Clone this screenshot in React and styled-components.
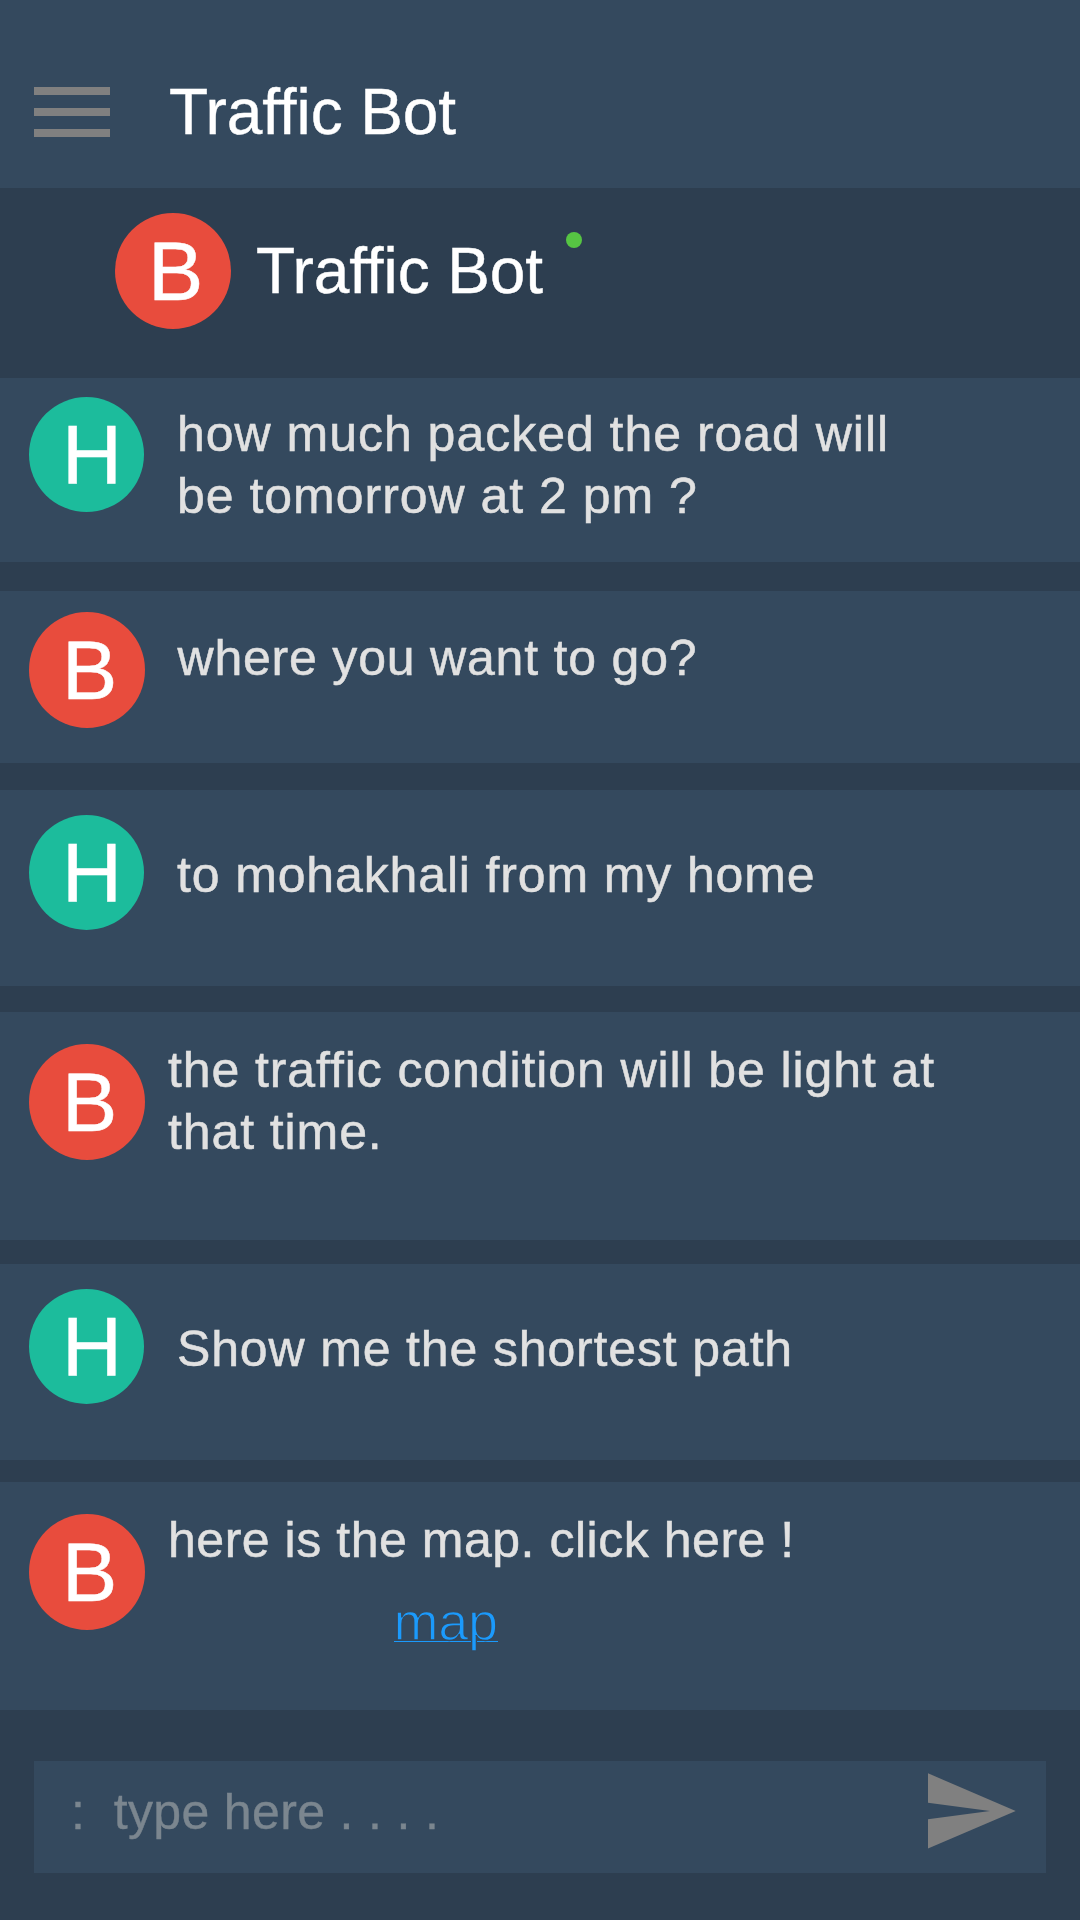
import React from "react";
import styled, { createGlobalStyle } from "styled-components";

const GlobalStyle = createGlobalStyle`
  *, *::before, *::after { box-sizing: border-box; }
  body {
    margin: 0;
    background: #2d3e50;
    font-family: "Liberation Sans", Arial, Helvetica, sans-serif;
  }
`;

const Screen = styled.main`
  width: 1080px;
  height: 1920px;
  display: flex;
  flex-direction: column;
  overflow: hidden;
  background: #2d3e50;
`;

const AppBar = styled.header`
  height: 188px;
  flex: none;
  display: flex;
  align-items: flex-start;
  padding: 76px 0 0 34px;
  background: #34495e;
`;

const MenuButton = styled.button`
  display: flex;
  flex-direction: column;
  gap: 13px;
  width: 76px;
  margin: 11px 59px 0 0;
  padding: 0;
  border: 0;
  background: none;
`;

const MenuBar = styled.span`
  height: 8px;
  background: #808080;
`;

const Title = styled.h1`
  margin: 0;
  font-size: 64px;
  font-weight: 400;
  line-height: 72px;
  letter-spacing: -0.1px;
  color: #fff;
  -webkit-text-stroke: 0.4px #fff;
  font-variant-ligatures: none;
  white-space: nowrap;
  transform: scaleY(1.025);
  transform-origin: 0 58px;
`;

const Contact = styled.section`
  height: 190px;
  flex: none;
  display: flex;
  align-items: flex-start;
  padding: 25px 0 0 115px;
`;

const ContactName = styled(Title).attrs({ as: "h2" })`
  width: 288px;
  margin: 22px 22px 0 25px;
`;

const OnlineDot = styled.span`
  width: 16px;
  height: 16px;
  margin-top: 19px;
  border-radius: 50%;
  background: #56c543;
`;

const Avatar = styled.div`
  flex: none;
  width: ${(p) => (p.$bot ? 116 : 115)}px;
  height: ${(p) => (p.$bot ? 116 : 115)}px;
  padding: 17px 0 0 33px;
  border-radius: 50%;
  background: ${(p) => (p.$bot ? "#e84c3d" : "#1cbc9c")};
  color: #fff;
  -webkit-text-stroke: 0.5px #fff;
  font-size: 83px;
  line-height: 83px;
`;

const Thread = styled.section`
  flex: none;
  display: flex;
  flex-direction: column;
`;

const Message = styled.article`
  display: flex;
  align-items: flex-start;
  height: ${(p) => p.$height}px;
  margin-bottom: ${(p) => p.$gap}px;
  padding: ${(p) => p.$top}px 0 0 29px;
  background: #34495e;
`;

const Body = styled.div`
  margin: ${(p) => p.$shift}px 0 0 ${(p) => p.$indent}px;
`;

const Line = styled.p`
  margin: 0;
  font-size: 50px;
  line-height: 62px;
  letter-spacing: ${(p) => p.$tracking}px;
  color: #e1e1e1;
  -webkit-text-stroke: 0.5px #e1e1e1;
  white-space: nowrap;
`;

const MapLink = styled.a`
  display: block;
  width: 104px;
  height: 41px;
  margin: 30px 0 0 225.5px;
  border-bottom: 1px solid #1b9afc;
  font-size: 54px;
  line-height: 40px;
  letter-spacing: -0.2px;
  color: #1b9afc;
  -webkit-text-stroke: 1.3px #34495e;
  text-decoration: none;
`;

const Composer = styled.footer`
  display: flex;
  justify-content: space-between;
  align-items: flex-start;
  height: 112px;
  margin: 51px 34px 0;
  padding: 0 30px 0 37px;
  background: #34495e;
`;

const Placeholder = styled.span`
  margin-top: 20px;
  font-size: 50px;
  line-height: 62px;
  letter-spacing: 0.35px;
  color: #7b868f;
  -webkit-text-stroke: 0.4px #7b868f;
  white-space: pre;
`;

const SendIcon = styled.svg`
  width: 88px;
  height: 76px;
  margin-top: 12px;
  fill: #808080;
`;

const messages = [
  { bot: false, height: 184, gap: 29, top: 19, shift: 6, indent: 33, lines: [["how much packed the road will", 0.98], ["be tomorrow at 2 pm ?", 0.98]] },
  { bot: true, height: 172, gap: 27, top: 21, shift: 15, indent: 32.5, lines: [["where you want to go?", 0.8]] },
  { bot: false, height: 196, gap: 26, top: 25, shift: 29, indent: 33, lines: [["to mohakhali from my home", 0.86]] },
  { bot: true, height: 228, gap: 24, top: 32, shift: -5, indent: 23, lines: [["the traffic condition will be light at", 0.9], ["that time.", 0.9]] },
  { bot: false, height: 196, gap: 22, top: 25, shift: 29, indent: 33, lines: [["Show me the shortest path", 0.85]] },
  { bot: true, height: 228, gap: 0, top: 32, shift: -5, indent: 23, link: "map", lines: [["here is the map. click here !", 0.53]] },
];

export default function App() {
  return (
    <>
      <GlobalStyle />
      <Screen>
        <AppBar>
          <MenuButton aria-label="Menu">
            <MenuBar />
            <MenuBar />
            <MenuBar />
          </MenuButton>
          <Title>Traffic Bot</Title>
        </AppBar>
        <Contact>
          <Avatar $bot>B</Avatar>
          <ContactName>Traffic Bot</ContactName>
          <OnlineDot />
        </Contact>
        <Thread>
          {messages.map((m) => (
            <Message key={m.lines[0][0]} $height={m.height} $gap={m.gap} $top={m.top}>
              <Avatar $bot={m.bot}>{m.bot ? "B" : "H"}</Avatar>
              <Body $shift={m.shift} $indent={m.indent}>
                {m.lines.map(([text, tracking]) => (
                  <Line key={text} $tracking={tracking}>{text}</Line>
                ))}
                {m.link && <MapLink href="#map">{m.link}</MapLink>}
              </Body>
            </Message>
          ))}
        </Thread>
        <Composer>
          <Placeholder>{":  type here . . . ."}</Placeholder>
          <SendIcon viewBox="0 0 88 76" aria-label="Send">
            <path d="M0 0.3 87.7 38 0 75.4V46.3L62 38 0 29.8Z" />
          </SendIcon>
        </Composer>
      </Screen>
    </>
  );
}
